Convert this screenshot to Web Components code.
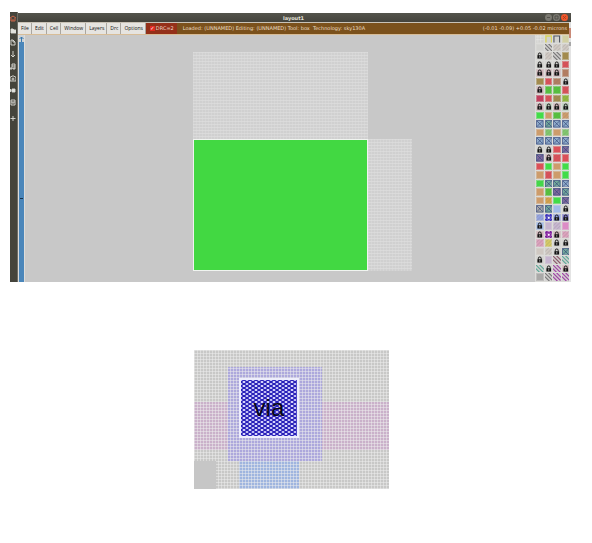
<!DOCTYPE html>
<html lang="en">
<head>
<meta charset="utf-8">
<title>layout1</title>
<style>
body{margin:0;background:#fff;font-family:"Open Sans","Noto Sans",sans-serif}
</style>
</head>
<body>
<layout-page></layout-page>
<script>
const define=(name,html,setup)=>customElements.define(name,class extends HTMLElement{
  constructor(){super();const t=document.createElement('template');t.innerHTML=html;
    this.attachShadow({mode:'open'}).append(t.content.cloneNode(true));}
  connectedCallback(){if(setup&&!this.ready){this.ready=true;setup(this.shadowRoot);}}
});

define('title-bar',`<style>
:host{display:grid;grid-template-columns:1fr auto 1fr;align-items:center;height:9px;background:linear-gradient(#54544c,#44433c);color:#e4e2d8;font:bold 5px/8px "DejaVu Sans",sans-serif}
h1{font:inherit;margin:0;padding-left:6px;grid-column:2}
nav{display:flex;justify-content:flex-end;gap:1px;padding-right:3px}
button{width:7px;height:7px;padding:0;border:0;border-radius:50%;background:#7b7971;display:grid;place-items:center}
button.close{background:#f0572c}
svg{width:5px;height:5px;fill:none;stroke:#4a4842;stroke-width:.8}
.close svg{stroke:#a13c1c}
</style><h1><slot></slot></h1><nav>
<button aria-label="Minimise"><svg viewBox="0 0 5 5"><path d="M1 2.500h3"/></svg></button>
<button aria-label="Maximise"><svg viewBox="0 0 5 5"><path d="M1 1h3v3H1z"/></svg></button>
<button class="close" aria-label="Close"><svg viewBox="0 0 5 5"><path d="M1 1l3 3M4 1L1 4"/></svg></button></nav>`);

define('tool-dock',`<style>
:host{display:flex;flex-direction:column;align-items:flex-start;width:8px;box-sizing:border-box;background:linear-gradient(90deg,#45443b 7px,#97968f);overflow:hidden}
button{width:6px;height:12px;padding:0;border:0;background:none;flex:none;display:grid;place-items:center}
button:last-child{margin-top:4px}
svg{width:6px;height:7px;fill:none;stroke:#deded8;stroke-width:.9}
.home{stroke:#d86a49}
.fill{fill:#e2e2dc}
</style>
<button aria-label="Home"><svg class="home" viewBox="0 0 6 7"><path d="M0 3l3-2 3 2M1 3v3h4V3M3 6V4"/></svg></button>
<button aria-label="Open"><svg class="fill" viewBox="0 0 6 7"><path d="M1 2h2l1 1h2v3H1z"/></svg></button>
<button aria-label="New"><svg viewBox="0 0 6 7"><path d="M1 1h2l2 2v3H1zM3 1v2h2"/></svg></button>
<button aria-label="Download"><svg viewBox="0 0 6 7"><path d="M3 0v6M1 4l2 2 2-2"/></svg></button>
<button aria-label="Music"><svg viewBox="0 0 6 7"><path d="M2 5V1h3v4M2 3h3M0 5h2v1H0zM3 5h2v1H3z"/></svg></button>
<button aria-label="Camera"><svg viewBox="0 0 6 7"><path d="M0 2h1l1-1h2l1 1h1v4H0z"/><circle cx="3" cy="4" r="1"/></svg></button>
<button aria-label="Video"><svg class="fill" viewBox="0 0 6 7"><path d="M2 2h3v3H2zM0 2l1 1v1L0 5z"/></svg></button>
<button aria-label="Archive"><svg viewBox="0 0 6 7"><path d="M1 1h4v5H1zM1 3h4M2 4h2"/></svg></button>
<button aria-label="Add"><svg viewBox="0 0 6 7"><path d="M3 1v5M.5 3.500h5"/></svg></button>`);

define('menu-bar',`<style>
:host{display:flex;align-items:stretch;height:13px;background:#7b511c;color:#ecdfc6;white-space:nowrap;border:solid #c9c2b6;border-width:1px 0;border-bottom-color:#d8bd97;box-sizing:border-box;font:5px/11px "DejaVu Sans",sans-serif}
button{font:5px/11px "Open Sans",sans-serif;color:#111;background:#e6e4e0;border:0;border-right:1px solid #aaa69f;padding:0 2px 0 3px;margin:0}
label{display:flex;align-items:center;gap:1px;background:#943019;color:#f0d3c6;padding:0 3px 0 4px}
input{appearance:none;width:5px;height:5px;margin:0;background:#e02c20;display:grid;place-items:center;overflow:hidden}
input::after{content:"✓";font:bold 5px/5px "DejaVu Sans",sans-serif;color:#fff}
.status{padding-left:6px}
.coords{margin-left:auto;padding-right:2px}
</style><button>File</button><button>Edit</button><button>Cell</button><button>Window</button><button>Layers</button><button>Drc</button><button>Options</button><label><input type="checkbox" checked>DRC=2</label><span class="status">Loaded: (UNNAMED) Editing: (UNNAMED) Tool: box&nbsp; Technology: sky130A</span><span class="coords">(-0.01 -0.09) +0.05 -0.02 microns</span>`);

define('scroll-strip',`<style>
:host{display:flex;flex-direction:column;width:5px;border:solid #dcdcda;border-width:0 1px;background:#4a86ba}
button{height:7px;padding:0;border:0;background:#ccd2d6;display:grid;place-items:center}
svg{width:5px;height:6px;fill:none;stroke:#3677ad}
i{height:1px;margin:156px 1px 0;background:#16324b}
</style><button aria-label="Scroll up"><svg viewBox="0 0 5 6"><path d="M2.500 6V1M0.500 3l2-2 2 2"/></svg></button><i></i>`);

define('mesh-canvas',`<style>
:host{display:grid;grid-template-columns:168fr 175fr 44fr 123fr;grid-template-rows:17px 87px 132px 10px;background:#c8c8c8;min-width:0}
.mesh{background:repeating-linear-gradient(90deg,#dedede66 0 1px,transparent 1px 3px),repeating-linear-gradient(#e2e2e288 0 1px,transparent 1px 3px),#d0d0d0}
.a{grid-area:2/2}.b{grid-area:3/3}
.box{grid-area:3/2;background:#42d842;border:1px solid #f0f4f0}
</style><div class="mesh a"></div><div class="box"></div><div class="mesh b"></div>`);

define('layer-palette',`<style>
:host{display:grid;grid-template-columns:repeat(4,1fr);grid-template-rows:repeat(29,1fr);gap:1px;width:34px;padding:0 0 1px 1px;box-sizing:border-box;background:#dcdcd9;overflow:hidden}
button{padding:0;border:0;min-width:0;min-height:0;display:grid;background:var(--c);box-shadow:inset 0 0 0 1px #dcdcd966;overflow:hidden}
svg{width:100%;height:100%;min-height:0}
</style>`,root=>{
  const colours={w:'#d2d2cf',y:'#d2d0a4',e:'#cfc8c2',o:'#a28b4e',r:'#db5058',b:'#b27d61',g:'#55c33d',G:'#42dc48',t:'#cd9c6b',u:'#8fabc9',n:'#73a99a',m:'#c73c5d',l:'#92ba3e',p:'#80689c',L:'#a2bbe8',B:'#94a3df',V:'#7d78ca',i:'#c6b5cf',k:'#dc8bc6',q:'#dba1bc',Y:'#d4c965',P:'#b65ac4',T:'#b9cdb9',a:'#aaa9a8',d:'#cfb5b9',v:'#b36ab8',O:'#d6a24a',f:'#81c76e'};
  const stripes={a:'#777',d:'#8b586a',T:'#5caa98',v:'#a140a8',P:'#7a2299'};
  /* Each cell is a colour key followed by its pattern key. */
  const rows=[
    'w# w[ w] y-','w- a/ eh eh','w* eh a/ o-','w* w* w* rh','d* d* d* b-','o- rh bh w*','d* gh gh rh','mh rh oh lh',
    'd* T* d* T*','G- t- gh th','ux nx ux ux','t- fh t- fh','ux ux ux ux','w* w* r- px','px d* rh r-','r- G- t- G-',
    't- rh t- G-','Gh nx nx ux','t- gh px nx','t- Oh G- px','ax nx L- w*','Bh V+ B* V*','L* i- ih k-','d* P+ d* qh',
    'qh Yh w* w*','e- eh w* nx','w* i- d/ T/','T/ w* v/ d*','a- a/ v/ v/'];
  const marks={
    '*':'<path d="M2.500 4V2.500a1.500 1.500 0 0 1 3 0V4" fill="none" stroke="#111"/><path d="M1.500 3.500h5V7h-5z" fill="#111"/><path d="M4 4.500v1.500" stroke="#bbb"/>',
    'x':'<path d="M.5.500h7v7h-7zM1 1l6 6M7 1L1 7" fill="none" stroke="#35477c" stroke-opacity=".8" stroke-width=".9"/>',
    '+':'<path d="M0 2h8M0 6h8M2 0v8M6 0v8" stroke="var(--p)" stroke-width="1.500" stroke-dasharray="2 1"/><circle cx="4" cy="4" r="1" fill="#fff"/>',
    '/':'<path d="M-1 3l6 6M0 0l8 8M3-1l6 6" stroke="var(--s)" stroke-width="1.200"/>',
    'h':'<path d="M0 4l4-4M0 8l8-8M4 8l4-4" stroke="#777" stroke-opacity=".35" stroke-width=".7"/>',
    '#':'<path d="M0 2h8M0 5h8M2 0v8M5 0v8" stroke="#eee" stroke-width=".5"/>',
    '[':'<path d="M1 8V1h6v7" fill="none" stroke="#d9d35c" stroke-width="1.500"/>',
    ']':'<path d="M1 8V1h6v7" fill="none" stroke="#555963" stroke-width="1.200"/>','-':''};
  rows.flatMap(r=>r.split(' ')).forEach(([colour,mark],i)=>{
    const b=document.createElement('button');b.setAttribute('aria-label','Layer '+(i+1));
    b.style.setProperty('--c',mark==='/'?'#d0cecd':colours[colour]);
    b.style.setProperty('--s',stripes[colour]||'#777');
    b.style.setProperty('--p',colour==='P'?'#7a2299':'#3a2fc0');
    b.innerHTML='<svg viewBox="0 0 8 8" preserveAspectRatio="none">'+marks[mark]+'</svg>';root.append(b);});
});

define('via-figure',`<style>
:host{display:grid;grid-template-columns:22fr 12fr 11fr 60fr 23fr 67fr;grid-template-rows:17px 11px 24px 36px 12px 11px 28px;width:35%;background:#c8c8c7;isolation:isolate}
:host::after{content:"";grid-area:1/1/-1/-1;z-index:1;background:repeating-linear-gradient(90deg,#eeeeee80 0 1px,transparent 1px 3px),repeating-linear-gradient(#eeeeee80 0 1px,transparent 1px 3px)}
.pink{grid-area:4/1/6/-1;background:#cab1ca}
.blue{grid-area:7/4;background:#9fb5df}
.purple{grid-area:2/3/7/6;background:#ada8dc}
.blank{grid-area:7/1;background:#c6c6c6;z-index:2}
.via{grid-area:3/4/5/5;z-index:3;min-width:0;display:grid;place-items:center;border:2px solid #eeeefc;font:24px/24px "Liberation Sans",Arial,sans-serif;color:#080818;background:radial-gradient(ellipse 2px 1px,#d5d2fa 60%,transparent) 0 0/6px 4px,radial-gradient(ellipse 2px 1px,#c0bcf4 60%,transparent) 3px 2px/6px 4px,#281fb8}
</style><div class="pink"></div><div class="blue"></div><div class="purple"></div><div class="blank"></div><div class="via">via</div>`);

define('layout-page',`<style>
:host{display:block;padding:13px 21px 40px 10px}
.window{display:grid;grid-template-columns:auto 1fr 2px}
.main{display:flex;flex-direction:column;min-width:0}
title-bar{grid-column:1/-1}
.work{display:flex;flex:1;min-height:0}
mesh-canvas{flex:1}
tool-dock{margin-top:-10px;z-index:1}
.edge{background:linear-gradient(#ddd 6px,#c98a78 6px 16px,#e4e4e4 16px 20px,#a8a8a8 20px 24px,#e4e4e4 24px)}
.figure{display:flex;justify-content:center;padding:68px 0 0 2px}
</style><section class="window"><title-bar>layout1</title-bar><tool-dock></tool-dock><div class="main"><menu-bar></menu-bar><div class="work"><scroll-strip></scroll-strip><mesh-canvas></mesh-canvas><layer-palette></layer-palette></div></div><div class="edge"></div></section><div class="figure"><via-figure></via-figure></div>`);
</script>
</body>
</html>
